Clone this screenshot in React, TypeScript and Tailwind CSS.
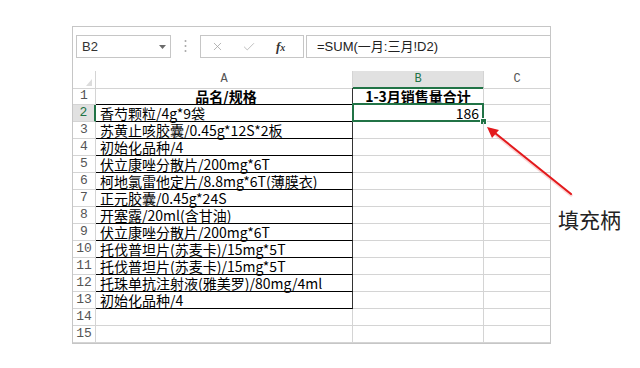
import { Check, X } from 'lucide-react';

const rows: { label: string; value?: string; bold?: boolean }[] = [
  { label: '品名/规格', value: '1-3月销售量合计', bold: true },
  { label: '香芍颗粒/4g*9袋', value: '186' },
  { label: '苏黄止咳胶囊/0.45g*12S*2板' },
  { label: '初始化品种/4' },
  { label: '伏立康唑分散片/200mg*6T' },
  { label: '柯地氯雷他定片/8.8mg*6T(薄膜衣)' },
  { label: '正元胶囊/0.45g*24S' },
  { label: '开塞露/20ml(含甘油)' },
  { label: '伏立康唑分散片/200mg*6T' },
  { label: '托伐普坦片(苏麦卡)/15mg*5T' },
  { label: '托伐普坦片(苏麦卡)/15mg*5T' },
  { label: '托珠单抗注射液(雅美罗)/80mg/4ml' },
  { label: '初始化品种/4' },
];

const cellFont = "font-['Noto_Sans_CJK_SC',sans-serif]";
const gridFont = "font-['Liberation_Mono',monospace]";

function FormulaBar() {
  return (
    <div className="flex h-[44px] items-start pl-[3px] pt-[8px]">
      <div className="flex h-[23px] w-[95px] items-center justify-between border border-[#c6c6c6] pl-[5px] pr-[4px] font-['Liberation_Sans',sans-serif] text-[13px] text-[#333]">
        <span>B2</span>
        <svg width="7" height="4" viewBox="0 0 7 4">
          <path d="M0 0h7L3.5 4z" fill="#6b6b6b" />
        </svg>
      </div>
      <div className="flex w-[29px] justify-center pt-[4px]">
        <svg width="3" height="14" viewBox="0 0 3 14">
          <circle cx="1.5" cy="2" r="1" fill="#a8a8a8" />
          <circle cx="1.5" cy="7" r="1" fill="#a8a8a8" />
          <circle cx="1.5" cy="12" r="1" fill="#a8a8a8" />
        </svg>
      </div>
      <div className="flex h-[23px] w-[104px] items-center border border-[#c6c6c6] pl-[10px]">
        <X size={13} strokeWidth={1.4} className="text-[#a0a0a0]" />
        <Check size={14} strokeWidth={1.4} className="ml-[18px] text-[#b0b0b0]" />
        <span className="ml-[20px] font-['Liberation_Serif',serif] text-[13px] font-bold italic text-[#333]">
          f<span className="text-[10px]">x</span>
        </span>
      </div>
      <div className="ml-[2px] flex h-[23px] flex-1 items-center border-y border-l border-[#c6c6c6] pl-[10px] font-['Liberation_Sans','Noto_Sans_CJK_SC',sans-serif] text-[13px] text-[#222]">
        =SUM(一月:三月!D2)
      </div>
    </div>
  );
}

function HeaderRow() {
  return (
    <div className={`grid h-[17px] grid-cols-[23px_257px_131px_1fr] ${gridFont} text-[12px] leading-[16px] text-[#555]`}>
      <div className="relative border-b border-r border-[#d4d4d4]">
        <svg className="absolute bottom-[2px] right-[3px]" width="6" height="7" viewBox="0 0 6 7">
          <path d="M6 0v7H0z" fill="#dcdcdc" />
        </svg>
      </div>
      <div className="border-b border-r border-[#d4d4d4] text-center">A</div>
      <div className="border-b-2 border-r border-b-[#217346] border-r-[#d4d4d4] bg-[#e1e1e1] text-center text-[#217346]">B</div>
      <div className="border-b border-[#d4d4d4] text-center">C</div>
    </div>
  );
}

function DataRow({ index }: { index: number }) {
  const row = rows[index - 1];
  const selected = index === 2;
  const bordered = !!row;
  return (
    <div className="grid h-[17px] grid-cols-[23px_257px_131px_1fr]">
      <div
        className={`border-b border-[#d4d4d4] text-center ${gridFont} text-[13px] leading-[16px] ${
          selected ? 'border-r-2 border-r-[#217346] bg-[#e1e1e1] text-[#217346]' : 'border-r text-[#555]'
        }`}
      >
        {index}
      </div>
      <div
        className={`whitespace-nowrap pl-[4px] ${cellFont} text-[14px] leading-[16px] text-black ${
          bordered ? 'border-b border-r border-b-black border-r-[#333]' : 'border-b border-r border-[#d4d4d4]'
        } ${row?.bold ? 'text-center font-bold' : ''}`}
      >
        {row?.label}
      </div>
      <div
        className={`relative border-b border-r border-[#d4d4d4] ${cellFont} text-[14px] leading-[16px] text-black ${
          row?.bold ? 'text-center font-bold' : 'pr-[4px] text-right'
        }`}
      >
        {row?.value}
        {selected ? (
          <div className="pointer-events-none absolute bottom-[-1px] left-[-1px] right-[-1px] top-[-2px] border-2 border-[#217346]">
            <div className="absolute bottom-[-5px] right-[-5px] h-[7px] w-[7px] border border-white bg-[#217346]" />
          </div>
        ) : null}
      </div>
      <div className="border-b border-[#d4d4d4]" />
    </div>
  );
}

export default function App() {
  return (
    <div className="relative h-[368px] w-[640px] overflow-hidden bg-white pl-[72px] pt-[26px]">
      <div className="w-[479px] border border-[#c6c6c6]">
        <FormulaBar />
        <HeaderRow />
        {Array.from({ length: 15 }, (_, i) => (
          <DataRow key={i} index={i + 1} />
        ))}
      </div>

      <svg className="pointer-events-none absolute left-0 top-0" width="640" height="368" viewBox="0 0 640 368">
        <line x1="571" y1="195" x2="495" y2="134" stroke="#f08a8a" strokeWidth="3.5" strokeLinecap="round" opacity="0.35" />
        <line x1="571" y1="194" x2="495" y2="133" stroke="#e3191c" strokeWidth="2" strokeLinecap="round" />
        <path d="M487 127 L499 130 L492 138 Z" fill="#e3191c" />
      </svg>

      <div className="absolute left-[558px] top-[205px] font-['Noto_Sans_CJK_SC',sans-serif] text-[21px] leading-[28px] text-[#222]">
        填充柄
      </div>
    </div>
  );
}
